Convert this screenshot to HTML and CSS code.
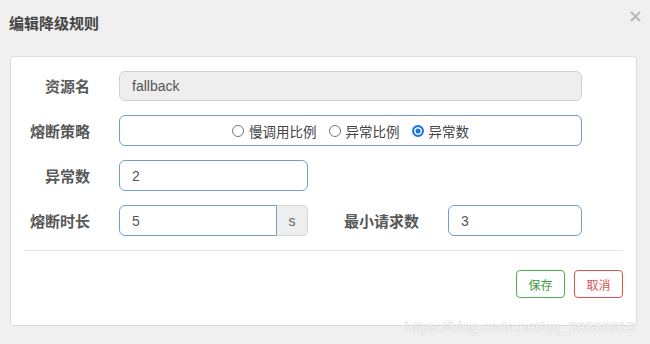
FILE: index.html
```html
<!DOCTYPE html>
<html lang="zh-CN">
<head>
  <meta charset="UTF-8">
  <title>编辑降级规则</title>
  <link rel="stylesheet" href="styles.css">
</head>
<body>
  <div class="dialog">
    <div class="header">
      <h3 class="title">编辑降级规则</h3>
      <span class="close">
        <svg width="11" height="11" viewBox="0 0 11 11"><path d="M1 1L10 10M10 1L1 10" stroke="#b8b8b8" stroke-width="2"/></svg>
      </span>
    </div>

    <div class="panel">
      <div class="row">
        <label class="label">资源名</label>
        <input class="field wide" type="text" value="fallback" disabled>
      </div>
      <div class="row">
        <label class="label">熔断策略</label>
        <div class="field wide radios">
          <span class="opt"><span class="radio"></span>慢调用比例</span>
          <span class="opt"><span class="radio"></span>异常比例</span>
          <span class="opt"><span class="radio checked"></span>异常数</span>
        </div>
      </div>
      <div class="row">
        <label class="label">异常数</label>
        <input class="field short" type="text" value="2">
      </div>
      <div class="row">
        <label class="label">熔断时长</label>
        <div class="group">
          <input class="field grouped" type="text" value="5">
          <span class="addon">s</span>
        </div>
        <label class="label label2">最小请求数</label>
        <input class="field small" type="text" value="3">
      </div>

      <div class="divider"></div>

      <div class="actions">
        <button class="btn save">保存</button>
        <button class="btn cancel">取消</button>
      </div>
    </div>
  </div>
  <div class="watermark">https://blog.csdn.net/qq_39668819</div>
</body>
</html>
```

FILE: styles.css
```css
body {
  margin: 0;
  background-color: #f0f0f0;
  font-family: "Liberation Sans", "Noto Sans CJK SC", sans-serif;
  color: #555;
  width: 650px;
  height: 344px;
  overflow: hidden;
  position: relative;
}
.dialog {
  padding: 0 13px 0 10px;
}
.header {
  height: 56px;
  display: flex;
  align-items: flex-start;
  justify-content: space-between;
}
.title {
  margin: 15px 0 0 -1px;
  font-size: 15px;
  line-height: 18px;
  font-weight: bold;
  color: #444;
}
.close {
  margin-top: 8px;
  margin-right: -4px;
}
.panel {
  background: #fff;
  border: 1px solid #dcdcdc;
  border-radius: 4px;
  padding: 13px 13px 14px 0;
  height: 241px;
}
.row {
  display: flex;
  align-items: center;
  height: 31px;
  margin-bottom: 14px;
}
.label {
  width: 79px;
  margin-right: 29px;
  text-align: right;
  font-size: 15px;
  font-weight: bold;
  color: #585858;
  line-height: 20px;
  font-family: "Noto Sans CJK SC", sans-serif;
}
.label2 {
  width: 111px;
}
.field {
  box-sizing: border-box;
  height: 31px;
  border: 1px solid #739dcb;
  border-radius: 6px;
  background: #fff;
  padding: 0 12px;
  font-family: "Liberation Sans", "Noto Sans CJK SC", sans-serif;
  font-size: 14px;
  color: #555;
  outline: none;
}
input.field:disabled {
  background: #eeeeee;
  border-color: #d2d2d2;
  color: #555;
  height: 30px;
}
.wide {
  width: 463px;
}
.short {
  width: 189px;
}
.small {
  width: 134px;
}
.group {
  display: flex;
  width: 189px;
}
.grouped {
  width: 158px;
  border-radius: 6px 0 0 6px;
}
.addon {
  box-sizing: border-box;
  width: 31px;
  height: 31px;
  background: #eeeeee;
  border: 1px solid #d8d8d8;
  border-left: none;
  border-radius: 0 5px 5px 0;
  display: flex;
  align-items: center;
  justify-content: center;
  font-size: 14px;
  color: #666;
}
.radios {
  display: flex;
  align-items: center;
  justify-content: center;
  gap: 12px;
  font-family: "Noto Sans CJK SC", sans-serif;
  font-size: 13.5px;
  color: #444;
}
.opt {
  display: flex;
  align-items: center;
}
.radio {
  box-sizing: border-box;
  width: 12px;
  height: 12px;
  border: 1px solid #767676;
  border-radius: 50%;
  margin-right: 5px;
  background: #fff;
}
.radio.checked {
  border: 2px solid #1a73e8;
  background: #1a73e8;
  box-shadow: inset 0 0 0 1.5px #fff;
}
.divider {
  height: 1px;
  background: #e5e5e5;
  margin: 11px 0 19px 13px;
}
.actions {
  display: flex;
  justify-content: flex-end;
  gap: 9px;
}
.btn {
  box-sizing: border-box;
  width: 49px;
  height: 28px;
  background: #fff;
  border-radius: 4px;
  font-family: "Noto Sans CJK SC", sans-serif;
  font-size: 12px;
  padding: 0;
  cursor: pointer;
}
.save {
  border: 1px solid #4cae4c;
  color: #3a9a3a;
}
.cancel {
  border: 1px solid #d9534f;
  color: #d9534f;
}
.watermark {
  position: absolute;
  left: 405px;
  top: 318px;
  font-size: 15px;
  color: rgba(255, 255, 255, 0.85);
  text-shadow: 0 0 1px rgba(120, 120, 120, 0.5);
  font-family: "Liberation Sans", sans-serif;
}
```
